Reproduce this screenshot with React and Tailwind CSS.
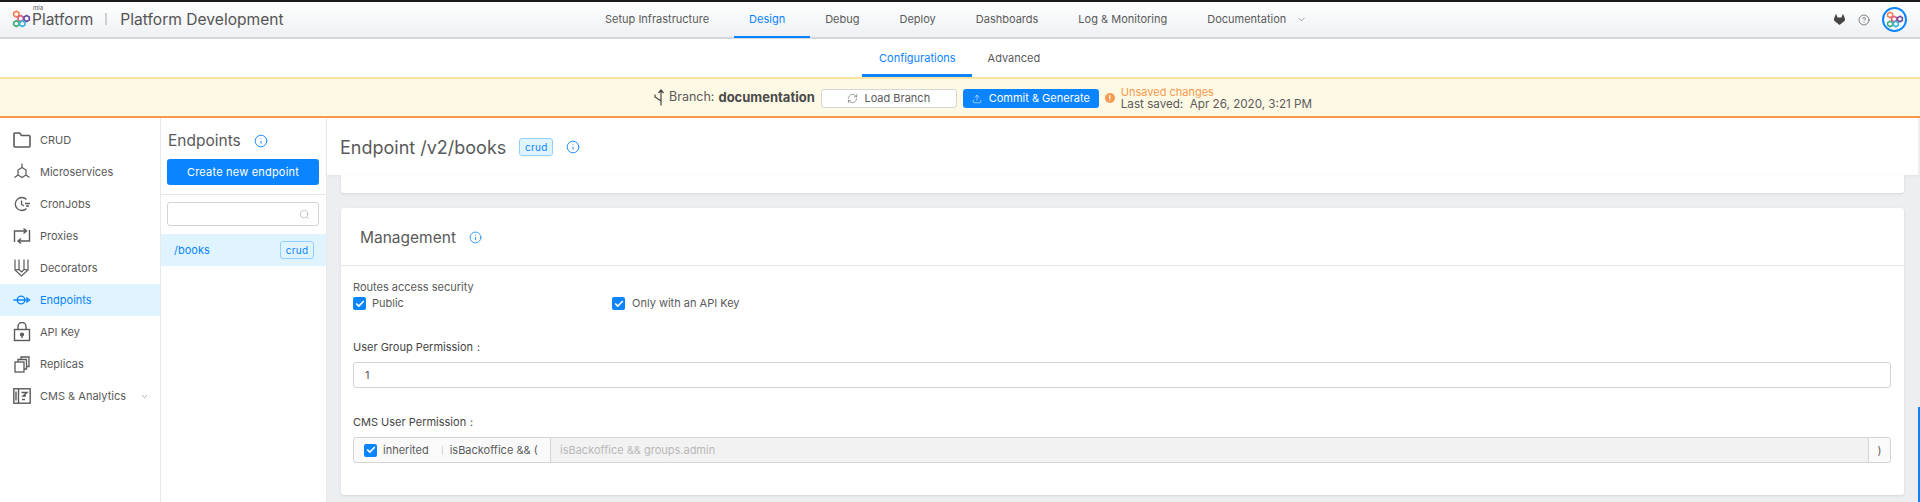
import React from 'react';
import { Search, RefreshCw, Upload, Info, ChevronDown, Check, CircleHelp } from 'lucide-react';
import { SiGitlab } from 'react-icons/si';

const LogoMark = ({ size = 22 }) => (
  <svg width={size} height={size} viewBox="0 0 22 22" fill="none" strokeWidth="2">
    <polygon points="5,1.5 8,3.2 8,6.5 5,8.2 2,6.5 2,3.2" stroke="#ef8354" />
    <polygon points="10,6.5 13,8.2 13,11.5 10,13.2 7,11.5 7,8.2" stroke="#e0607e" />
    <polygon points="17,6.5 20,8.2 20,11.5 17,13.2 14,11.5 14,8.2" stroke="#6b4fa0" />
    <polygon points="5,12.5 8,14.2 8,17.5 5,19.2 2,17.5 2,14.2" stroke="#3fae7a" />
    <polygon points="12,12.5 15,14.2 15,17.5 12,19.2 9,17.5 9,14.2" stroke="#3db5d8" />
  </svg>
);

const Icon = ({ children, w = 18, h = 18, sw = 1.4 }) => (
  <svg width={w} height={h} viewBox={`0 0 ${w} ${h}`} fill="none" stroke="currentColor" strokeWidth={sw}>
    {children}
  </svg>
);

const FolderIcon = () => (
  <Icon sw={1.6}>
    <path d="M1 3a1 1 0 0 1 1-1h4.5l2 2.5H16a1 1 0 0 1 1 1V15a1 1 0 0 1-1 1H2a1 1 0 0 1-1-1z" />
  </Icon>
);

const MicroIcon = () => (
  <Icon sw={1.2}>
    <polygon points="9,4.5 13,7 13,12 9,14.5 5,12 5,7" />
    <path d="M9 0.5V4.5M13 12l3.5 2.5M5 12l-3.5 2.5" />
  </Icon>
);

const CronIcon = () => (
  <Icon sw={1.3}>
    <path d="M13.5 4.5A6.5 6.5 0 1 0 13.5 13.5" />
    <path d="M8.5 5.5V9.5L11 11M12 8.5H17M13 11H16" />
  </Icon>
);

const ProxyIcon = () => (
  <Icon sw={1.4}>
    <path d="M1.5 15V4H13M10.5 1.5L13.5 4L10.5 6.5" />
    <path d="M16.5 3V14H5M8 11.5L5 14L8 16.5" />
  </Icon>
);

const DecoratorIcon = () => (
  <Icon sw={1.2}>
    <path d="M2 0.5V11L8.5 17L15 11V0.5M6 0.5V10.5M11 0.5V10.5M2 11L6 10.5L8.5 13L11 10.5L15 11" />
  </Icon>
);

const EndpointIcon = () => (
  <Icon w={19} sw={1.4}>
    <circle cx="8.5" cy="9" r="4" />
    <path d="M0.5 9H16M14 6.5L17.5 9L14 11.5" />
  </Icon>
);

const LockIcon = () => (
  <Icon h={20} sw={1.4}>
    <rect x="1.5" y="7.5" width="15" height="11" />
    <path d="M5 7.5V4.5a4 4 0 0 1 8 0v3" />
    <circle cx="9" cy="12.5" r="1.4" fill="currentColor" />
    <path d="M9 13v3" />
  </Icon>
);

const ReplicaIcon = () => (
  <Icon w={16} h={17} sw={1.3}>
    <rect x="1" y="6" width="9" height="10" />
    <path d="M4 6V3.5H12.5V13H10" />
    <path d="M7 3.5V1H15V10.5H12.5" />
  </Icon>
);

const CmsIcon = () => (
  <Icon h={16} sw={1.4}>
    <rect x="0.8" y="0.8" width="16.4" height="14.4" />
    <path d="M5.5 0.8V15.2M3 3.5V12.5M8.5 4.5H14L10 8H13M9 11.5H12" />
  </Icon>
);

const BranchIcon = () => (
  <svg width="13" height="17" viewBox="0 0 13 17" fill="none" stroke="#444" strokeWidth="1.2">
    <path d="M8 16.5V1.5M5.5 4L8 1L10.5 4M8 12L2 8V5.5" />
  </svg>
);

const CheckBox = () => (
  <span className="flex h-[13px] w-[13px] shrink-0 items-center justify-center rounded-[2px] bg-[#0a84ff]">
    <Check size={10} strokeWidth={4} className="text-white" />
  </span>
);

const Badge = () => (
  <span className="flex h-[18px] w-[34px] items-center justify-center rounded-[3px] border border-[#8fd0ff] bg-[#e0f4ff] text-[10px] tracking-[0.3px] text-[#0a84ff]">
    crud
  </span>
);

const navItems = ['Setup Infrastructure', 'Design', 'Debug', 'Deploy', 'Dashboards', 'Log & Monitoring'];

const sideItems = [
  { label: 'CRUD', icon: <FolderIcon /> },
  { label: 'Microservices', icon: <MicroIcon /> },
  { label: 'CronJobs', icon: <CronIcon /> },
  { label: 'Proxies', icon: <ProxyIcon /> },
  { label: 'Decorators', icon: <DecoratorIcon /> },
  { label: 'Endpoints', icon: <EndpointIcon />, active: true },
  { label: 'API Key', icon: <LockIcon /> },
  { label: 'Replicas', icon: <ReplicaIcon /> },
  { label: 'CMS & Analytics', icon: <CmsIcon />, caret: true },
];

export default function App() {
  return (
    <div className="flex h-[502px] w-full flex-col overflow-hidden bg-white font-['Inter','Liberation_Sans',sans-serif] text-[#5a5a5a]">
      {/* Top bar */}
      <header className="flex h-[39px] shrink-0 items-center border-t-2 border-b-2 border-t-[#1c1c1c] border-b-[#d6d7db] bg-gradient-to-b from-white to-[#eef0f3]">
        <div className="flex w-[585px] shrink-0 items-center pl-[12px]">
          <LogoMark size={19} />
          <div className="relative ml-[1px] text-[15.5px] leading-none text-[#555]">
            <span className="absolute -top-[7px] left-[1px] text-[6px]">mia</span>
            Platform
          </div>
          <span className="mr-[13px] ml-[12px] h-[12px] w-[2px] bg-[#cfcfcf]" />
          <span className="text-[15.6px] text-[#555]">Platform Development</span>
        </div>
        <nav className="flex items-center text-[11px]">
          {navItems.map((item) => (
            <a
              key={item}
              className={`relative mx-[20px] flex h-[35px] items-center whitespace-nowrap ${item === 'Design' ? 'text-[#0a84ff]' : ''}`}
            >
              {item}
              {item === 'Design' && <span className="absolute -bottom-[1px] -left-[15px] -right-[25px] h-[2px] bg-[#0a84ff]" />}
            </a>
          ))}
          <a className="mx-[20px] flex items-center gap-[10px]">
            Documentation
            <ChevronDown size={11} strokeWidth={1.2} />
          </a>
        </nav>
        <div className="ml-auto flex items-center pr-[13px]">
          <SiGitlab size={11} className="text-[#444]" />
          <CircleHelp size={12} strokeWidth={1.3} className="ml-[13px] text-[#444]" />
          <span className="ml-[12px] flex h-[25px] w-[25px] items-center justify-center rounded-full border-2 border-[#0a84ff] bg-white">
            <LogoMark size={18} />
          </span>
        </div>
      </header>

      {/* Sub tabs */}
      <div className="flex h-[38px] shrink-0 items-center bg-white pl-[879px] text-[11px]">
        <a className="relative flex h-full items-center text-[#0a84ff]">
          Configurations
          <span className="absolute bottom-0 -left-[17px] -right-[16px] h-[3px] bg-[#0a84ff]" />
        </a>
        <a className="ml-[32px]">Advanced</a>
      </div>

      {/* Branch banner */}
      <div className="flex h-[41px] shrink-0 items-center border-t-2 border-b-2 border-t-[#fae39a] border-b-[#f5994e] bg-[#fef9e5] pl-[653px] text-[12.5px]">
        <BranchIcon />
        <span className="ml-[3px]">Branch:</span>
        <b className="ml-[4px] text-[13px] font-bold text-[#4a4a4a]">documentation</b>
        <button className="mt-[2px] ml-[6px] flex h-[19px] w-[136px] items-center justify-center gap-[6px] rounded-[3px] border border-[#d5d5d5] bg-white text-[11px]">
          <RefreshCw size={11} strokeWidth={1.2} />
          Load Branch
        </button>
        <button className="mt-[2px] ml-[6px] flex h-[19px] w-[136px] items-center justify-center gap-[7px] whitespace-nowrap rounded-[3px] bg-[#0a84ff] text-[11px] text-white">
          <Upload size={10} strokeWidth={1.3} />
          Commit &amp; Generate
        </button>
        <span className="ml-[6px] flex h-[10px] w-[10px] items-center justify-center rounded-full bg-[#f5994e] text-[8px] font-bold text-white">!</span>
        <div className="ml-[6px] flex flex-col text-[11.65px] leading-[12px]">
          <span className="text-[11px] text-[#f5994e]">Unsaved changes</span>
          <span>Last saved:&nbsp; Apr 26, 2020, 3:21 PM</span>
        </div>
      </div>

      <div className="flex min-h-0 flex-1">
        {/* Main sidebar */}
        <aside className="w-[161px] shrink-0 border-r border-[#e8e9ec] pt-[6px] text-[11px]">
          {sideItems.map((item) => (
            <a
              key={item.label}
              className={`flex h-[32px] items-center pl-[13px] ${item.active ? 'bg-[#e0f4ff] text-[#0a84ff]' : ''}`}
            >
              <span className="flex w-[18px] justify-center">{item.icon}</span>
              <span className="ml-[9px]">{item.label}</span>
              {item.caret && <ChevronDown size={9} strokeWidth={1.3} className="ml-[14px]" />}
            </a>
          ))}
        </aside>

        {/* Endpoint list */}
        <section className="w-[166px] shrink-0 border-r border-[#e8e9ec]">
          <div className="px-[6px] pt-[11px]">
            <div className="flex h-[22px] items-center gap-[13px] pt-[1px] pl-[1px] text-[15.5px]">
              Endpoints
              <Info size={14} strokeWidth={1.5} className="text-[#0a84ff]" />
            </div>
            <button className="mt-[8px] h-[26px] w-[152px] rounded-[3px] bg-[#0a84ff] text-[11px] tracking-[0.2px] text-white">
              Create new endpoint
            </button>
          </div>
          <div className="mt-[9px] border-t border-[#e6e6e6] px-[6px] pt-[7px]">
            <div className="flex h-[24px] w-[152px] items-center justify-end rounded-[3px] border border-[#d5d5d5] pr-[8px]">
              <Search size={11} strokeWidth={1.4} className="text-[#a8a8a8]" />
            </div>
          </div>
          <div className="mt-[8px] flex h-[32px] items-center justify-between bg-[#e0f4ff] pr-[12px] pl-[13px] text-[11px] text-[#0a84ff]">
            /books
            <Badge />
          </div>
        </section>

        {/* Detail */}
        <main className="flex min-w-0 flex-1 flex-col bg-[#eceef2]">
          <div className="flex h-[57px] shrink-0 items-center border-r-2 border-[#eceef2] bg-white pt-[1px] pl-[13px] shadow-[0_1px_3px_rgba(0,0,0,0.05)]">
            <h1 className="text-[18px] font-normal">Endpoint /v2/books</h1>
            <span className="ml-[13px]"><Badge /></span>
            <Info size={14} strokeWidth={1.5} className="ml-[13px] text-[#0a84ff]" />
          </div>
          <div className="flex min-h-0 flex-1">
            <div className="min-w-0 flex-1 px-[14px]">
              <div className="h-[18px] rounded-b-[3px] bg-white shadow-[0_1px_3px_rgba(0,0,0,0.1)]" />
              <div className="mt-[15px] h-[287px] rounded-[3px] bg-white shadow-[0_1px_3px_rgba(0,0,0,0.1)]">
                <div className="flex h-[58px] items-center gap-[13px] border-b border-[#e6e6e6] pt-[2px] pl-[19px] text-[15.5px]">
                  Management
                  <Info size={13} strokeWidth={1.5} className="text-[#0a84ff]" />
                </div>
                <div className="pt-[14px] pr-[13px] pl-[12px] text-[11px]">
                  <div className="leading-[14px]">Routes access security</div>
                  <div className="mt-[2px] flex h-[15px] items-center">
                    <div className="flex w-[259px] items-center gap-[6px]">
                      <CheckBox />
                      Public
                    </div>
                    <div className="flex items-center gap-[7px]">
                      <CheckBox />
                      Only with an API Key
                    </div>
                  </div>
                  <div className="mt-[29px] leading-[14px] text-[#444]">User Group Permission：</div>
                  <div className="mt-[8px] flex h-[26px] items-center rounded-[3px] border border-[#d5d5d5] pl-[11px]">1</div>
                  <div className="mt-[27px] leading-[14px] text-[#444]">CMS User Permission：</div>
                  <div className="mt-[8px] flex h-[26px] items-stretch">
                    <div className="flex w-[198px] shrink-0 items-center rounded-l-[3px] border border-[#d5d5d5] bg-[#fafafa] pl-[10px]">
                      <CheckBox />
                      <span className="ml-[6px]">inherited</span>
                      <span className="ml-[13px] h-[9px] w-px bg-[#d5d5d5]" />
                      <span className="ml-[7px] whitespace-nowrap">isBackoffice &amp;&amp; (</span>
                    </div>
                    <div className="flex flex-1 items-center border-y border-[#d5d5d5] bg-[#f2f2f2] pl-[9px] text-[#b8b8b8]">
                      isBackoffice &amp;&amp; groups.admin
                    </div>
                    <div className="flex w-[23px] shrink-0 items-center justify-center rounded-r-[3px] border border-[#d5d5d5] bg-[#fafafa]">)</div>
                  </div>
                </div>
              </div>
            </div>
            <div className="flex w-[2px] shrink-0 flex-col justify-end">
              <div className="h-[95px] bg-[#0a84ff]" />
            </div>
          </div>
        </main>
      </div>
    </div>
  );
}
